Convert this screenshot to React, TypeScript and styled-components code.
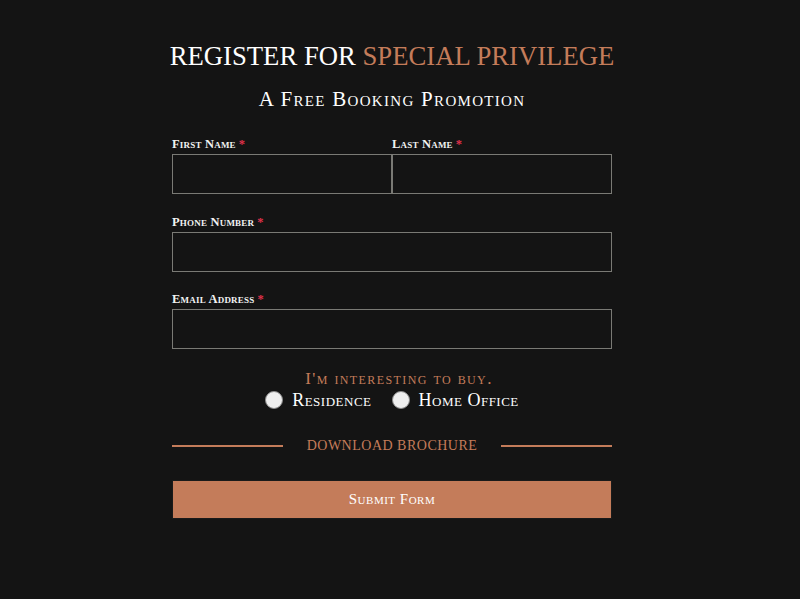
import styled, { createGlobalStyle } from 'styled-components';

const GlobalStyle = createGlobalStyle`
  html, body {
    margin: 0;
    padding: 0;
    background: #141414;
  }
  body {
    font-family: 'Liberation Serif', 'DejaVu Serif', serif;
    color: #ffffff;
  }
`;

const accent = '#c47c5a';

const Page = styled.div`
  width: 784px;
  min-height: 599px;
  padding-top: 39px;
  box-sizing: border-box;
`;

const Form = styled.form`
  width: 440px;
  margin: 0 auto;
  display: flex;
  flex-direction: column;
`;

const Title = styled.h1`
  margin: 0 -20px;
  text-align: center;
  font-size: 26.7px;
  font-weight: 400;
  letter-spacing: 0;
  line-height: 34px;
  white-space: nowrap;
  color: #ffffff;
`;

const Accent = styled.span`
  color: ${accent};
`;

const Subtitle = styled.h2`
  margin: 14px 0 0;
  text-align: center;
  font-size: 21px;
  font-weight: 400;
  font-variant: small-caps;
  letter-spacing: 1.3px;
  line-height: 24px;
  color: #ffffff;
`;

const Fields = styled.div`
  margin-top: 24px;
  display: flex;
  flex-direction: column;
  gap: 18.5px;
`;

const Row = styled.div`
  display: grid;
  grid-template-columns: 1fr 1fr;
`;

const Field = styled.label`
  display: flex;
  flex-direction: column;
`;

const LabelText = styled.span`
  font-size: 12.5px;
  font-variant: small-caps;
  font-weight: 700;
  line-height: 18px;
  height: 19px;
  color: #f2f2f2;
  letter-spacing: 0.2px;
`;

const Req = styled.span`
  color: #e0314b;
  margin-left: 3px;
`;

const Input = styled.input`
  box-sizing: border-box;
  height: 40px;
  width: 100%;
  margin: 0;
  background: #141414;
  border: 1px solid #7a7a75;
  color: #fff;
  font: inherit;
  padding: 0 10px;
  outline: none;
`;

const Interest = styled.div`
  margin-top: 20px;
  display: flex;
  flex-direction: column;
  align-items: center;
`;

const Question = styled.p`
  margin: 0 0 0 14px;
  font-size: 17px;
  font-variant: small-caps;
  letter-spacing: 1.4px;
  line-height: 20px;
  color: ${accent};
`;

const Options = styled.div`
  display: flex;
  gap: 20px;
`;

const Option = styled.label`
  display: flex;
  align-items: center;
  gap: 9px;
  font-size: 18px;
  font-variant: small-caps;
  line-height: 22px;
  letter-spacing: 0.5px;
  color: #ffffff;
`;

const Radio = styled.span`
  width: 18px;
  height: 18px;
  border-radius: 50%;
  background: #efefef;
  border: 1px solid #8a8a8a;
  box-sizing: border-box;
`;

const Divider = styled.div`
  margin-top: 25px;
  display: flex;
  align-items: center;
  gap: 24px;
`;

const Line = styled.span`
  flex: 1;
  height: 2px;
  background: ${accent};
`;

const DividerText = styled.span`
  font-size: 14px;
  letter-spacing: 0.5px;
  line-height: 20px;
  color: ${accent};
`;

const Submit = styled.button`
  margin-top: 24px;
  height: 39px;
  width: 100%;
  border: 1px solid #1a1a1a;
  background: ${accent};
  color: #fff;
  font-family: inherit;
  font-size: 15px;
  font-variant: small-caps;
  letter-spacing: 0.5px;
  cursor: pointer;
`;

const Required = () => <Req>*</Req>;

export default function App() {
  return (
    <>
      <GlobalStyle />
      <Page>
        <Form onSubmit={e => e.preventDefault()}>
          <Title>
            REGISTER FOR <Accent>SPECIAL PRIVILEGE</Accent>
          </Title>
          <Subtitle>A Free Booking Promotion</Subtitle>
          <Fields>
            <Row>
              <Field>
                <LabelText>
                  First Name<Required />
                </LabelText>
                <Input type="text" />
              </Field>
              <Field>
                <LabelText>
                  Last Name<Required />
                </LabelText>
                <Input type="text" />
              </Field>
            </Row>
            <Field>
              <LabelText>
                Phone Number<Required />
              </LabelText>
              <Input type="tel" />
            </Field>
            <Field>
              <LabelText>
                Email Address<Required />
              </LabelText>
              <Input type="email" />
            </Field>
          </Fields>
          <Interest>
            <Question>I'm interesting to buy.</Question>
            <Options>
              <Option>
                <Radio />
                Residence
              </Option>
              <Option>
                <Radio />
                Home Office
              </Option>
            </Options>
          </Interest>
          <Divider>
            <Line />
            <DividerText>DOWNLOAD BROCHURE</DividerText>
            <Line />
          </Divider>
          <Submit type="submit">Submit Form</Submit>
        </Form>
      </Page>
    </>
  );
}
